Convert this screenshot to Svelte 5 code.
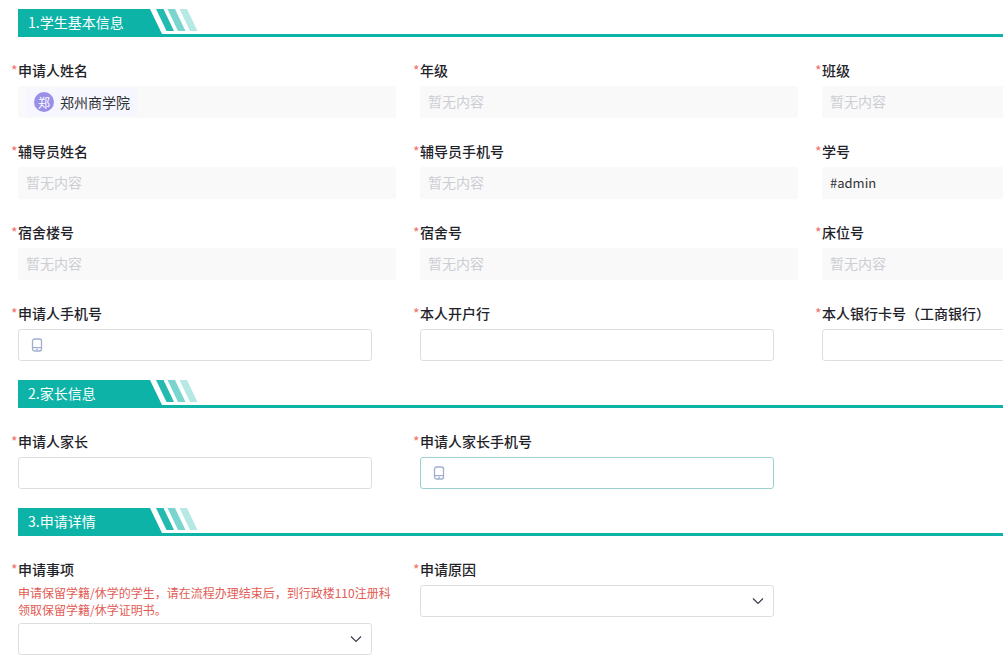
<script>
  const sections = [
    {
      title: '1.学生基本信息',
      fields: [
        { label: '申请人姓名', kind: 'user', value: '郑州商学院' },
        { label: '年级', kind: 'empty' },
        { label: '班级', kind: 'empty' },
        { label: '辅导员姓名', kind: 'empty' },
        { label: '辅导员手机号', kind: 'empty' },
        { label: '学号', kind: 'text', value: '#admin' },
        { label: '宿舍楼号', kind: 'empty' },
        { label: '宿舍号', kind: 'empty' },
        { label: '床位号', kind: 'empty' },
        { label: '申请人手机号', kind: 'phone' },
        { label: '本人开户行', kind: 'input' },
        { label: '本人银行卡号（工商银行）', kind: 'input' },
      ],
    },
    {
      title: '2.家长信息',
      fields: [
        { label: '申请人家长', kind: 'input' },
        { label: '申请人家长手机号', kind: 'phone', focused: true },
      ],
    },
    {
      title: '3.申请详情',
      fields: [
        {
          label: '申请事项',
          kind: 'select',
          note: '申请保留学籍/休学的学生，请在流程办理结束后，到行政楼110注册科领取保留学籍/休学证明书。',
        },
        { label: '申请原因', kind: 'select' },
      ],
    },
  ]
</script>

<div class="form">
  {#each sections as section}
    <section>
      <div class="head">
        <div class="tag">{section.title}</div>
        <svg class="stripes" width="48" height="22" viewBox="0 0 48 22" aria-hidden="true">
          <polygon points="0,0 7.5,0 18,22 10.5,22" fill="#0db3a7" opacity="0.9" />
          <polygon points="11.5,0 19,0 29.5,22 22,22" fill="#0db3a7" opacity="0.55" />
          <polygon points="23.5,0 31,0 41.5,22 34,22" fill="#0db3a7" opacity="0.3" />
        </svg>
      </div>

      <div class="grid">
        {#each section.fields as f}
          <div class="field">
            <div class="label"><span class="req">*</span>{f.label}</div>
            {#if f.note}
              <div class="note">{f.note}</div>
            {/if}

            {#if f.kind === 'empty'}
              <div class="readonly muted">暂无内容</div>
            {:else if f.kind === 'text'}
              <div class="readonly">{f.value}</div>
            {:else if f.kind === 'user'}
              <div class="readonly user">
                <span class="chip">
                  <span class="avatar">郑</span>
                  {f.value}
                </span>
              </div>
            {:else if f.kind === 'phone'}
              <div class="box" class:focused={f.focused}>
                <svg class="phone" width="12" height="14" viewBox="0 0 12 14" aria-hidden="true">
                  <rect x="1.5" y="1" width="9" height="12" rx="2" fill="none" stroke="#9fadd2" stroke-width="1.3" />
                  <path d="M1.5 9.6h9" stroke="#9fadd2" stroke-width="1.2" />
                  <path d="M5 11.3h2" stroke="#9fadd2" stroke-width="1" />
                </svg>
              </div>
            {:else if f.kind === 'select'}
              <div class="box select">
                <svg width="12" height="8" viewBox="0 0 12 8" aria-hidden="true">
                  <path d="M1 1.5l5 5 5-5" fill="none" stroke="#3a3f4b" stroke-width="1.2" />
                </svg>
              </div>
            {:else}
              <div class="box"></div>
            {/if}
          </div>
        {/each}
      </div>
    </section>
  {/each}
</div>

<style>
  :global(body) {
    margin: 0;
    background: #fff;
    overflow: hidden;
  }

  .form {
    width: 1003px;
    height: 659px;
    overflow: hidden;
    padding: 9px 0 0 18px;
    box-sizing: border-box;
    font-family: "Noto Sans CJK SC", "Noto Sans", sans-serif;
    font-size: 14px;
    color: #303133;
  }

  section + section {
    margin-top: 19px;
  }

  .head {
    display: flex;
    align-items: flex-start;
    height: 28px;
    box-sizing: border-box;
    border-bottom: 3px solid #0db3a7;
  }

  .tag {
    flex: none;
    width: 144px;
    height: 28px;
    padding-left: 10px;
    box-sizing: border-box;
    background: #0db3a7;
    color: #fff;
    font-size: 14px;
    line-height: 26px;
    clip-path: polygon(0 0, 132px 0, 144px 25px, 144px 28px, 0 28px);
  }

  .stripes {
    flex: none;
    margin-left: -6.5px;
  }

  .grid {
    display: grid;
    grid-template-columns: repeat(3, 378px);
    column-gap: 24px;
    row-gap: 23px;
    margin-top: 23px;
    align-items: start;
  }

  .label {
    height: 22px;
    margin-bottom: 4px;
    font-size: 14px;
    font-weight: 500;
    line-height: 20px;
    white-space: nowrap;
    color: #1f2329;
  }

  .req {
    display: inline-block;
    width: 7px;
    margin-left: -7px;
    color: #f0706a;
    font-weight: 400;
  }

  .note {
    width: 376px;
    margin-top: -1px;
    margin-bottom: 5px;
    font-size: 12px;
    line-height: 17px;
    color: #e25c55;
  }

  .readonly {
    display: flex;
    align-items: center;
    height: 32px;
    padding: 0 8px 2px;
    box-sizing: border-box;
    background: #f9f9fa;
    border-radius: 2px;
    font-size: 13px;
    color: #303133;
  }

  .muted {
    color: #ccced3;
    font-size: 14px;
  }

  .user {
    padding-bottom: 0;
  }

  .chip {
    display: flex;
    align-items: center;
    gap: 6px;
    height: 28px;
    padding: 0 8px;
    background: #f5f6fe;
    border-radius: 3px;
    font-size: 14px;
  }

  .avatar {
    display: flex;
    align-items: center;
    justify-content: center;
    width: 20px;
    height: 20px;
    border-radius: 50%;
    background: #9a8fe8;
    color: #fff;
    font-size: 12px;
  }

  .box {
    display: flex;
    align-items: center;
    width: 354px;
    height: 32px;
    padding: 0 11.5px;
    box-sizing: border-box;
    background: #fff;
    border: 1px solid #dcdee0;
    border-radius: 3px;
  }

  .box.focused {
    border-color: #9ccfcf;
  }

  .select {
    justify-content: flex-end;
    padding-right: 9px;
  }
</style>
